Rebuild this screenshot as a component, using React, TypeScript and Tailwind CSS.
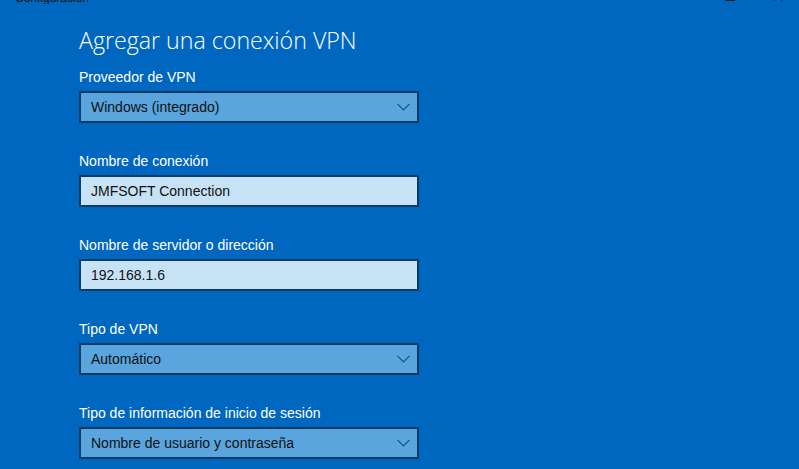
type Field = {
  label: string;
  value: string;
  kind: 'select' | 'input';
};

const fields: Field[] = [
  { label: 'Proveedor de VPN', value: 'Windows (integrado)', kind: 'select' },
  { label: 'Nombre de conexión', value: 'JMFSOFT Connection', kind: 'input' },
  { label: 'Nombre de servidor o dirección', value: '192.168.1.6', kind: 'input' },
  { label: 'Tipo de VPN', value: 'Automático', kind: 'select' },
  { label: 'Tipo de información de inicio de sesión', value: 'Nombre de usuario y contraseña', kind: 'select' },
];

function Chevron() {
  return (
    <svg width="13" height="8" viewBox="0 0 13 8" className="text-[#1f4f78]">
      <path d="M0.5 0.8 L6.5 6.8 L12.5 0.8" fill="none" stroke="currentColor" strokeWidth="1.2" />
    </svg>
  );
}

function FormField({ label, value, kind }: Field) {
  const box =
    kind === 'select'
      ? 'bg-[#5aa5dd]'
      : 'bg-[#c7e1f5]';
  return (
    <div className="flex flex-col">
      <div className="h-[20px] text-[14px] leading-[20px] text-white">{label}</div>
      <div
        className={`mt-[4px] flex h-[32px] w-[340px] items-center justify-between border-2 border-[#0f3a63] pl-[10px] pr-[7px] text-[14px] text-[#111] ${box}`}
      >
        <span>{value}</span>
        {kind === 'select' && <Chevron />}
      </div>
    </div>
  );
}

export default function App() {
  return (
    <div
      className="relative h-[469px] w-full overflow-hidden bg-[#0067c0]"
      style={{ fontFamily: '"Liberation Sans", Arial, sans-serif' }}
    >
      {/* title bar, mostly scrolled off the top */}
      <div className="flex h-[4px] items-end overflow-hidden">
        <span className="ml-[15px] text-[12px] leading-[12px] text-[#111]">Configuración</span>
      </div>
      <div className="absolute right-[64px] top-0 h-[1px] w-[10px] bg-[#222]" />
      <div className="absolute right-[17px] top-0 h-[2px] w-[8px] text-[#222]">
        <svg width="8" height="2" viewBox="0 0 8 2">
          <path d="M0 1 L1 0 M7 0 L8 1" stroke="currentColor" strokeWidth="1" />
        </svg>
      </div>

      <div className="flex flex-col pl-[79px]">
        <h1
          className="mt-[21px] text-[23.2px] font-light leading-[30px] text-white"
          style={{ fontFamily: '"Open Sans", "Liberation Sans", sans-serif' }}
        >
          Agregar una conexión VPN
        </h1>
        <div className="mt-[12px] flex flex-col gap-[28px]">
          {fields.map((f) => (
            <FormField key={f.label} {...f} />
          ))}
        </div>
      </div>
    </div>
  );
}
